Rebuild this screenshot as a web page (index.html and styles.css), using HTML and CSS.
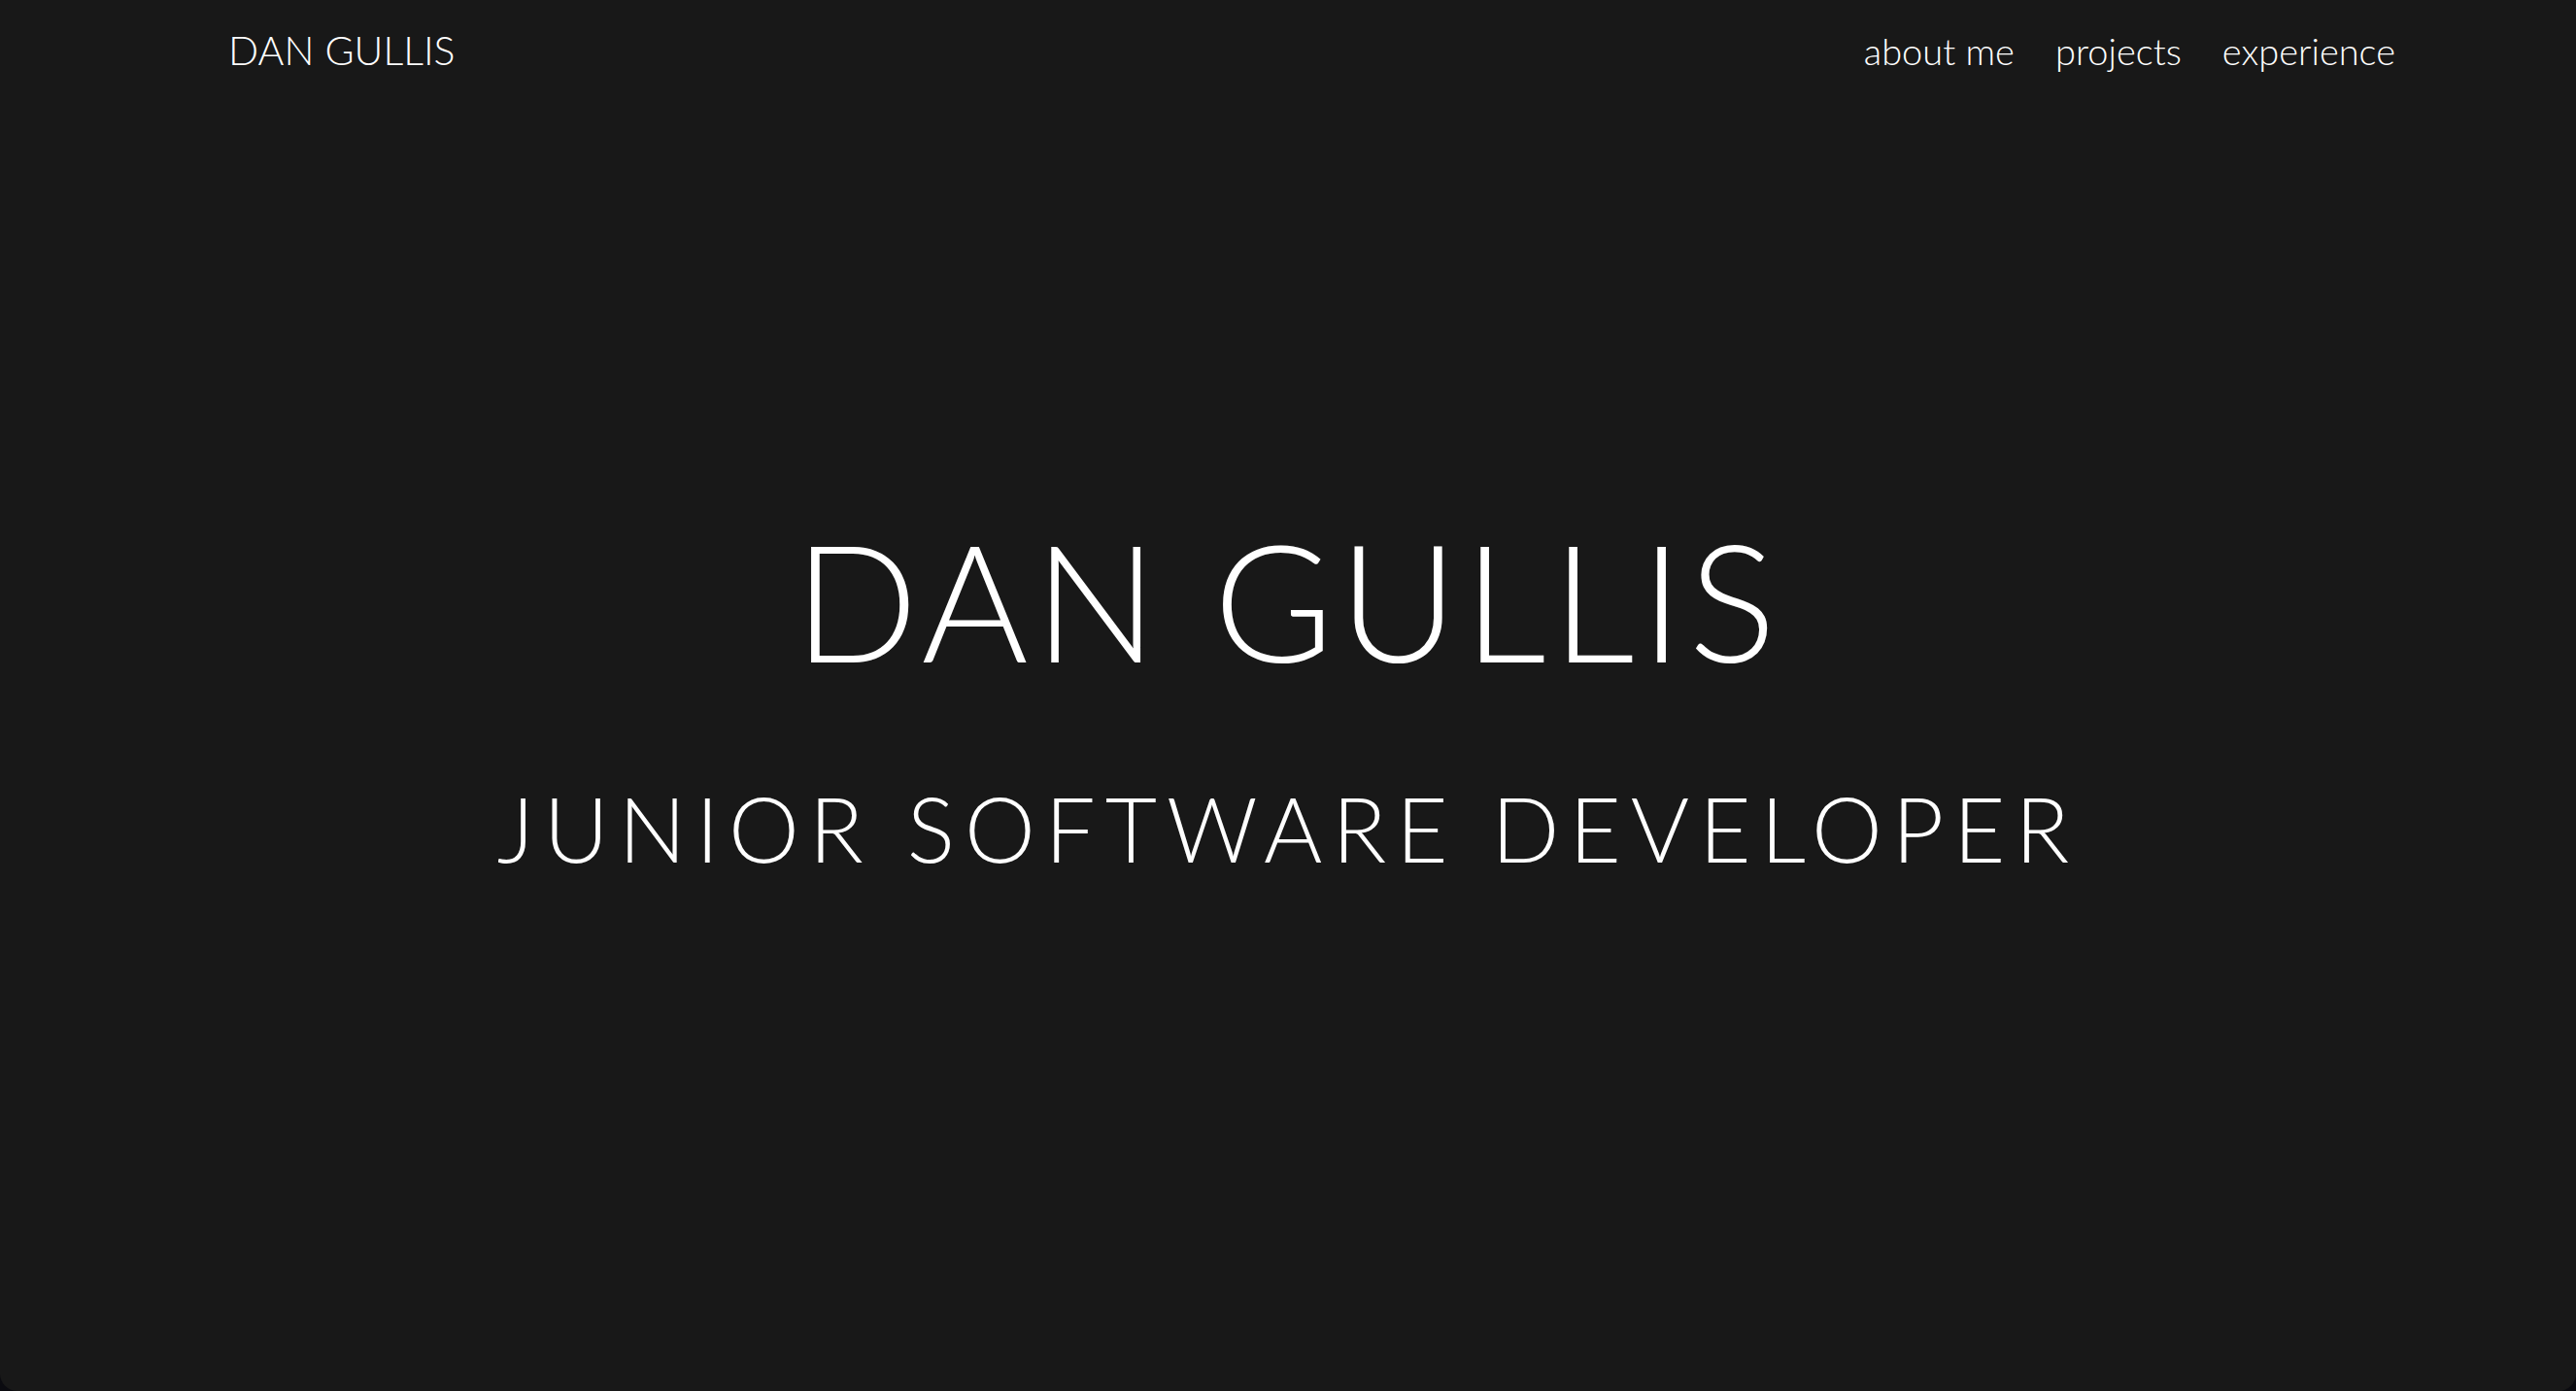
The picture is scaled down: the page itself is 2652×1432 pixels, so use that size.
FILE: index.html
```html
<!DOCTYPE html>
<html lang="en">
<head>
<meta charset="utf-8">
<title>Dan Gullis</title>
<link rel="stylesheet" href="styles.css">
</head>
<body>
<div class="page">
  <header class="topbar">
    <a class="brand" href="#">DAN GULLIS</a>
    <nav class="nav">
      <a href="#about">about me</a>
      <a href="#projects">projects</a>
      <a href="#experience">experience</a>
    </nav>
  </header>
  <main class="hero">
    <h1 class="hero-title">DAN GULLIS</h1>
    <h2 class="hero-sub">JUNIOR SOFTWARE DEVELOPER</h2>
  </main>
</div>
</body>
</html>
```
FILE: styles.css
```css
html, body {
  margin: 0;
  padding: 0;
  height: 100%;
  background: #0b0b10;
}
.page {
  height: 100%;
  background: #181818;
  color: #ffffff;
  font-family: "Lato", "Open Sans", sans-serif;
  font-weight: 300;
  display: flex;
  flex-direction: column;
  border-radius: 0 0 18px 18px;
  overflow: hidden;
}
.topbar {
  display: flex;
  justify-content: space-between;
  align-items: baseline;
  padding: 27px 186px 0 235px;
}
.brand {
  color: #fff;
  text-decoration: none;
  font-size: 41px;
  font-weight: 300;
}
.nav {
  display: flex;
  gap: 42px;
}
.nav a {
  color: #fff;
  text-decoration: none;
  font-size: 38px;
  font-weight: 300;
}
.hero {
  flex: 1;
  display: flex;
  flex-direction: column;
  align-items: center;
  justify-content: center;
  padding-bottom: 76px;
}
.hero-title {
  margin: 0;
  font-size: 168px;
  font-weight: 300;
  letter-spacing: 6px;
  line-height: 1;
}
.hero-sub {
  margin: 106px 0 0 0;
  font-size: 92px;
  font-weight: 300;
  letter-spacing: 10px;
  line-height: 1;
}
```
